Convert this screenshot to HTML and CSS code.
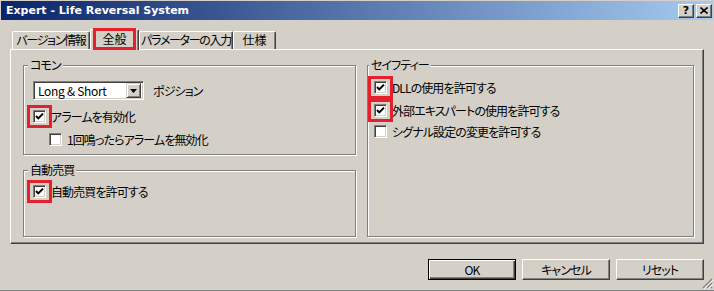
FILE: index.html
```html
<!DOCTYPE html>
<html lang="ja">
  <head>
    <meta charset="UTF-8" />
    <title>Expert - Life Reversal System</title>
    <link rel="stylesheet" href="styles.css">
  </head>
  <body>
    <div class="window">
      <div class="titlebar">
        <span class="title">Expert - Life Reversal System</span>
        <div class="caption-buttons">
          <span class="cap-btn">?</span>
          <span class="cap-btn">
            <svg width="8" height="7" viewBox="0 0 8 7">
              <path d="M0.5 0.5 L7.5 6.5 M7.5 0.5 L0.5 6.5" stroke="#000" stroke-width="1.6" />
            </svg>
          </span>
        </div>
      </div>

      <div class="tabs">
        <div class="tab tab-version">バージョン情報</div>
        <div class="tab tab-general active">全般</div>
        <div class="tab tab-params">パラメーターの入力</div>
        <div class="tab tab-spec">仕様</div>
      </div>

      <div class="panel">
        <div class="column">
          <fieldset class="group group-common">
            <legend>コモン</legend>
            <div class="row">
              <div class="select">
                <span class="select-value">Long &amp; Short</span>
                <span class="select-arrow">
                  <svg width="7" height="4" viewBox="0 0 7 4"><path d="M0 0 H7 L3.5 4 Z" fill="#000" /></svg>
                </span>
              </div>
              <span class="select-label">ポジション</span>
            </div>
            <label class="row row-alarm">
              <span class="check mark">
                <svg width="9" height="9" viewBox="0 0 9 9"><path d="M1 4 L3.3 6.4 L8 1.6" fill="none" stroke="#000" stroke-width="2" /></svg>
              </span>
              アラームを有効化
            </label>
            <label class="row row-once">
              <span class="check"></span>
              1回鳴ったらアラームを無効化
            </label>
          </fieldset>

          <fieldset class="group group-auto">
            <legend>自動売買</legend>
            <label class="row">
              <span class="check mark">
                <svg width="9" height="9" viewBox="0 0 9 9"><path d="M1 4 L3.3 6.4 L8 1.6" fill="none" stroke="#000" stroke-width="2" /></svg>
              </span>
              自動売買を許可する
            </label>
          </fieldset>
        </div>

        <fieldset class="group group-safety">
          <legend>セイフティー</legend>
          <label class="row">
            <span class="check mark">
              <svg width="9" height="9" viewBox="0 0 9 9"><path d="M1 4 L3.3 6.4 L8 1.6" fill="none" stroke="#000" stroke-width="2" /></svg>
            </span>
            DLLの使用を許可する
          </label>
          <label class="row row-next">
            <span class="check mark">
              <svg width="9" height="9" viewBox="0 0 9 9"><path d="M1 4 L3.3 6.4 L8 1.6" fill="none" stroke="#000" stroke-width="2" /></svg>
            </span>
            外部エキスパートの使用を許可する
          </label>
          <label class="row row-last">
            <span class="check"></span>
            シグナル設定の変更を許可する
          </label>
        </fieldset>
      </div>

      <div class="buttons">
        <button class="btn default" type="button">OK</button>
        <button class="btn" type="button">キャンセル</button>
        <button class="btn" type="button">リセット</button>
      </div>

      <span class="grip">
        <svg width="11" height="11" viewBox="0 0 11 11">
          <path d="M10 1 L1 10 M10 5 L5 10 M10 9 L9 10" stroke="#808080" stroke-width="1.2" />
          <path d="M11 2 L2 11 M11 6 L6 11" stroke="#fff" stroke-width="1" />
        </svg>
      </span>
    </div>
  </body>
</html>
```

FILE: styles.css
```css
body {
  margin: 0;
  background-color: #d4d0c8;
  font-family: "Noto Sans CJK JP", sans-serif;
  font-size: 12px;
  font-feature-settings: "palt";
  letter-spacing: -0.9px;
  color: #000;
}

.window {
  position: relative;
  width: 714px;
  height: 291px;
  box-sizing: border-box;
  padding-top: 1px;
  border-bottom: 1px solid #808080;
}

/* title bar */

.titlebar {
  display: flex;
  align-items: center;
  height: 19px;
  margin: 0 1px;
  padding-left: 5px;
  background: linear-gradient(to right, #0a246a, #a6caf0);
}

.title {
  color: #fff;
  font-family: "DejaVu Sans", sans-serif;
  font-weight: bold;
  font-size: 11px;
  letter-spacing: 0;
}

.caption-buttons {
  display: flex;
  gap: 2px;
  margin-left: auto;
  margin-right: 1px;
}

.cap-btn {
  display: flex;
  align-items: center;
  justify-content: center;
  width: 16px;
  height: 14px;
  box-sizing: border-box;
  background-color: #d4d0c8;
  border: 1px solid;
  border-color: #fff #404040 #404040 #fff;
  box-shadow: inset -1px -1px 0 #808080;
  font-family: "DejaVu Sans", sans-serif;
  font-weight: bold;
  font-size: 11px;
  letter-spacing: 0;
  line-height: 1;
}

/* tabs */

.tabs {
  display: flex;
  align-items: flex-end;
  height: 18px;
  margin: 11px 0 0 12px;
}

.tab {
  height: 18px;
  box-sizing: border-box;
  border-left: 1px solid #fff;
  border-top: 1px solid #fff;
  border-right: 1px solid #404040;
  border-radius: 2px 2px 0 0;
  box-shadow: inset -1px 0 0 #808080;
  text-align: center;
  line-height: 16px;
  letter-spacing: -1.3px;
  white-space: nowrap;
}

.tab-version {
  width: 78px;
}

.tab-general {
  width: 49px;
  letter-spacing: 0;
}

.tab-params {
  width: 94px;
}

.tab-spec {
  width: 43px;
  letter-spacing: 0;
}

.tab.active {
  position: relative;
  z-index: 1;
  height: 21px;
  margin-bottom: -1px;
  background-color: #d4d0c8;
  line-height: 17px;
}

.tab.active::after {
  content: "";
  position: absolute;
  left: 2px;
  right: 2px;
  top: -2px;
  bottom: 0;
  border: 3px solid #e3202b;
}

/* panel */

.panel {
  display: flex;
  gap: 11px;
  height: 195px;
  box-sizing: border-box;
  margin: 0 10px;
  padding: 8px 0 6px 12px;
  border: 1px solid;
  border-color: #fff #404040 #404040 #fff;
  box-shadow: inset -1px -1px 0 #808080;
}

.column {
  display: flex;
  flex-direction: column;
  width: 333px;
}

.group {
  margin: 0;
  min-width: 0;
  box-sizing: border-box;
  border: 1px solid #808080;
  box-shadow: inset 1px 1px 0 #fff, 1px 1px 0 #fff;
}

.group legend {
  margin-left: -5px;
  padding: 0 2px;
  background-color: #d4d0c8;
  line-height: 14px;
}

.group-common {
  height: 97px;
  padding: 9px 0 0 9px;
}

.group-auto {
  flex-grow: 1;
  margin-top: 8px;
  padding: 5px 0 0 9px;
}

.group-safety {
  width: 327px;
  padding: 6px 0 0 6px;
}

.row {
  display: flex;
  align-items: center;
  gap: 5px;
  height: 19px;
  white-space: nowrap;
}

.row-alarm {
  margin-top: 7px;
}

.row-once {
  margin-top: 4px;
  padding-left: 16px;
}

.row-next {
  margin-top: 4px;
}

.row-last {
  margin-top: 2px;
}

/* controls */

.select {
  display: flex;
  align-items: center;
  width: 111px;
  height: 19px;
  box-sizing: border-box;
  padding: 2px;
  background-color: #fff;
  border: 1px solid;
  border-color: #808080 #fff #fff #808080;
  box-shadow: inset 1px 1px 0 #404040, inset -1px -1px 0 #d4d0c8;
}

.select-value {
  flex-grow: 1;
  padding-left: 2px;
  line-height: 13px;
  letter-spacing: -0.3px;
}

.select-arrow {
  display: flex;
  align-items: center;
  justify-content: center;
  width: 15px;
  height: 15px;
  box-sizing: border-box;
  background-color: #d4d0c8;
  border: 1px solid;
  border-color: #d4d0c8 #404040 #404040 #d4d0c8;
  box-shadow: inset 1px 1px 0 #fff, inset -1px -1px 0 #808080;
}

.select-label {
  margin-left: 4px;
}

.check {
  position: relative;
  display: flex;
  align-items: center;
  justify-content: center;
  flex-shrink: 0;
  width: 13px;
  height: 13px;
  box-sizing: border-box;
  background-color: #fff;
  border: 1px solid;
  border-color: #808080 #fff #fff #808080;
  box-shadow: inset 1px 1px 0 #404040, inset -1px -1px 0 #d4d0c8;
}

.check.mark::after {
  content: "";
  position: absolute;
  left: -7px;
  right: -7px;
  top: -6px;
  bottom: -6px;
  border: 3px solid #e3202b;
}

/* dialog buttons */

.buttons {
  display: flex;
  justify-content: flex-end;
  gap: 6px;
  margin: 15px 10px 0 0;
}

.btn {
  width: 88px;
  height: 21px;
  box-sizing: border-box;
  padding: 0;
  background-color: #d4d0c8;
  border: 1px solid;
  border-color: #fff #404040 #404040 #fff;
  box-shadow: inset -1px -1px 0 #808080;
  font-family: "Noto Sans CJK JP", sans-serif;
  font-size: 12px;
  font-feature-settings: "palt";
  letter-spacing: -0.9px;
  color: #000;
}

.btn.default {
  border-color: #000;
  box-shadow: inset 1px 1px 0 #fff, inset -1px -1px 0 #404040, inset -2px -2px 0 #808080;
}

.grip {
  position: absolute;
  right: 1px;
  bottom: 1px;
  display: flex;
}
```
